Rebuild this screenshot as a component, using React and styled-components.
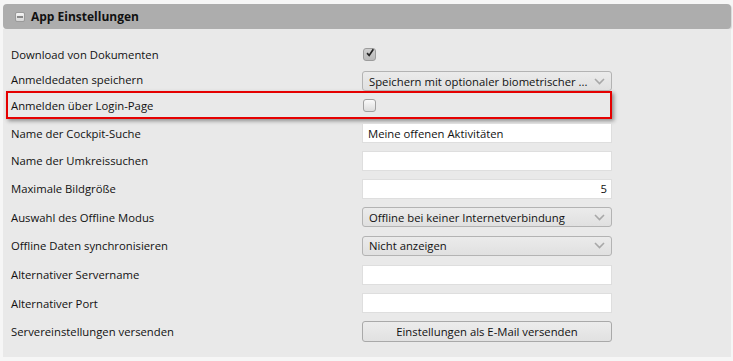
import styled, { createGlobalStyle } from 'styled-components';

const Global = createGlobalStyle`
  html, body {
    margin: 0;
    padding: 0;
    background: #f6f6f6;
  }
  body {
    font-family: "Open Sans", "Noto Sans", sans-serif;
    font-size: 11.3px;
    color: #111;
  }
`;

const rows = [
  { label: 'Download von Dokumenten', type: 'check', checked: true, h: 26 },
  { label: 'Anmeldedaten speichern', type: 'select', value: 'Speichern mit optionaler biometrischer ...', h: 24, shift: 4 },
  { label: 'Anmelden über Login-Page', type: 'check', checked: false, h: 28, mark: true },
  { label: 'Name der Cockpit-Suche', type: 'input', value: 'Meine offenen Aktivitäten', h: 28 },
  { label: 'Name der Umkreissuchen', type: 'input', value: '', h: 27 },
  { label: 'Maximale Bildgröße', type: 'input', value: '5', right: true, h: 29 },
  { label: 'Auswahl des Offline Modus', type: 'select', value: 'Offline bei keiner Internetverbindung', h: 28 },
  { label: 'Offline Daten synchronisieren', type: 'select', value: 'Nicht anzeigen', h: 29 },
  { label: 'Alternativer Servername', type: 'input', value: '', h: 29 },
  { label: 'Alternativer Port', type: 'input', value: '', h: 28 },
  { label: 'Servereinstellungen versenden', type: 'button', value: 'Einstellungen als E-Mail versenden', h: 28 },
];

function Chevron() {
  return (
    <svg width="11" height="7" viewBox="0 0 11 7">
      <path d="M1 1 L5.5 5.5 L10 1" fill="none" stroke="#a8a8a8" strokeWidth="1.6" />
    </svg>
  );
}

function Control({ row }) {
  if (row.type === 'check') {
    return (
      <Check $on={row.checked}>
        {row.checked && (
          <svg width="12" height="12" viewBox="0 0 12 12">
            <path d="M2.5 6.2 L5 9 L10 1.5" fill="none" stroke="#222" strokeWidth="2" />
          </svg>
        )}
      </Check>
    );
  }
  if (row.type === 'select') {
    return (
      <Select $shift={row.shift}>
        <SelectText>{row.value}</SelectText>
        <Chevron />
      </Select>
    );
  }
  if (row.type === 'button') {
    return <Button>{row.value}</Button>;
  }
  return <Input $right={row.right}>{row.value}</Input>;
}

export default function App() {
  return (
    <>
      <Global />
      <Panel>
        <Header>
          <Toggle />
          App Einstellungen
        </Header>
        <Body>
          {rows.map((row) => (
            <Row key={row.label} $h={row.h} $mark={row.mark}>
              <Label>{row.label}</Label>
              <Control row={row} />
            </Row>
          ))}
        </Body>
      </Panel>
    </>
  );
}

const Panel = styled.div`
  margin: 4px 2px 0 3px;
  width: 728px;
`;

const Header = styled.div`
  height: 25px;
  background: #adadad;
  border-radius: 4px;
  display: flex;
  align-items: center;
  gap: 6px;
  padding-left: 12px;
  font-weight: 700;
  font-size: 12px;
  color: #111;
  box-shadow: 1px 1px 1px rgba(0, 0, 0, 0.12);
`;

const Toggle = styled.span`
  position: relative;
  width: 8px;
  height: 8px;
  border-radius: 2px;
  background: linear-gradient(#f4f4f4, #d6d6d6);
  border: 1px solid #9a9a9a;
  &::after {
    content: '';
    position: absolute;
    left: 1px;
    right: 1px;
    top: 3px;
    height: 2px;
    background: #888;
  }
`;

const Body = styled.div`
  background: #e9e9e9;
  padding: 12px 0 12px 0;
`;

const Row = styled.div`
  height: ${(p) => p.$h}px;
  display: flex;
  align-items: center;
  box-sizing: border-box;
  width: 609px;
  padding-left: 8px;
  ${(p) =>
    p.$mark &&
    `
    margin-left: 3px;
    padding-left: 3px;
    width: 606px;
    border: 2px solid #e50000;
    box-shadow: 2px 2px 4px rgba(0, 0, 0, 0.4);
  `}
`;

const Label = styled.div`
  width: 351px;
  flex: none;
  white-space: nowrap;
`;

const Check = styled.div`
  width: 11px;
  height: 11px;
  margin-left: 1px;
  border: 1px solid ${(p) => (p.$on ? '#9c9c9c' : '#a0a0a0')};
  border-radius: 3px;
  background: ${(p) => (p.$on ? 'linear-gradient(#cfcfcf, #b9b9b9)' : 'linear-gradient(#fafafa, #dcdcdc)')};
  display: flex;
  align-items: center;
  justify-content: center;
  svg {
    margin-top: -3px;
    margin-left: 1px;
  }
`;

const Select = styled.div`
  width: 250px;
  height: 20px;
  margin-top: ${(p) => p.$shift || 0}px;
  box-sizing: border-box;
  border: 1px solid #b3b3b3;
  border-radius: 3px;
  background: linear-gradient(#ebebeb, #e0e0e0);
  display: flex;
  align-items: center;
  gap: 2px;
  padding: 0 6px 0 6px;
  svg {
    flex: none;
  }
`;

const SelectText = styled.span`
  flex: 1;
  white-space: nowrap;
  overflow: hidden;
`;

const Input = styled.div`
  width: 250px;
  height: 20px;
  box-sizing: border-box;
  border: 1px solid #dedede;
  background: #fff;
  display: flex;
  align-items: center;
  justify-content: ${(p) => (p.$right ? 'flex-end' : 'flex-start')};
  padding: 0 4px 0 5px;
  white-space: nowrap;
`;

const Button = styled.div`
  width: 250px;
  height: 21px;
  box-sizing: border-box;
  border: 1px solid #a9a9a9;
  border-radius: 3px;
  background: linear-gradient(#ececec, #e1e1e1);
  display: flex;
  align-items: center;
  justify-content: center;
  white-space: nowrap;
`;
